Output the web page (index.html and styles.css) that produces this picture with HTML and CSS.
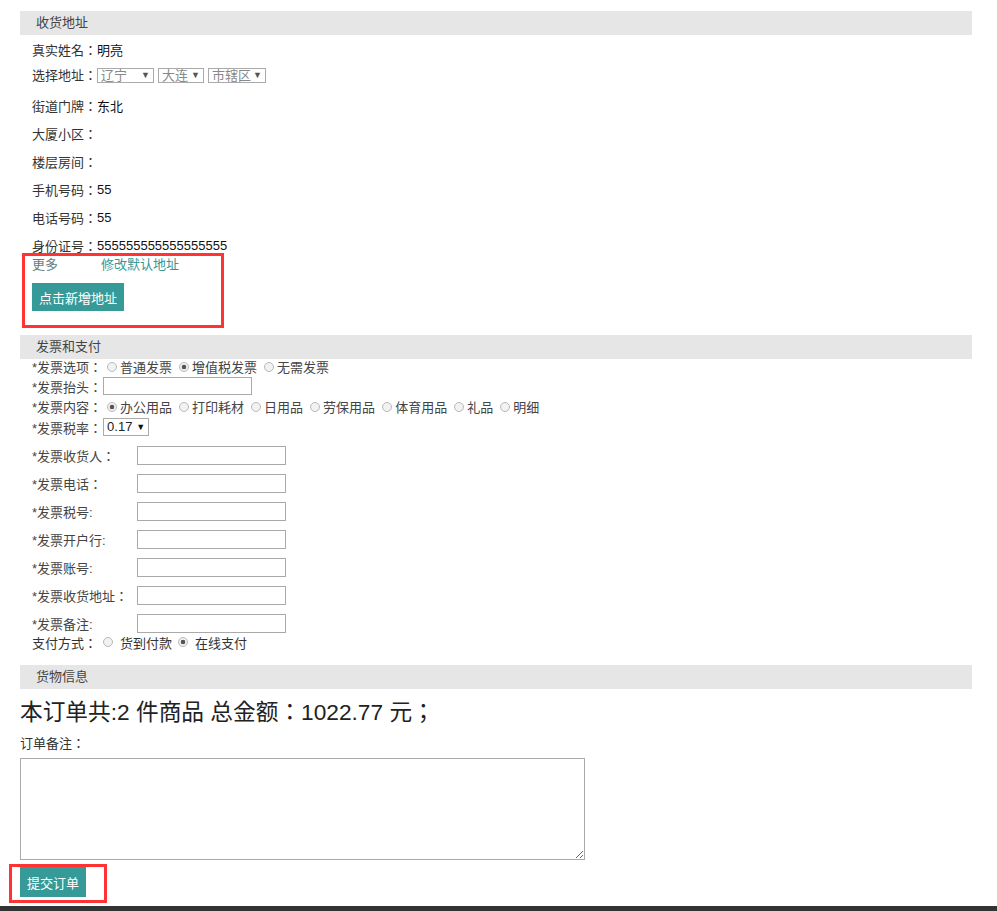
FILE: index.html
```html
<!DOCTYPE html>
<html>
<head>
    <meta charset="UTF-8">
    <title>确认订单</title>
    <link rel="stylesheet" href="styles.css">
</head>
<body>
    <div class="page">
        <div class="sec-title">收货地址</div>
        <div class="addr">
            <div class="row">真实姓名：<span class="val">明亮</span></div>
            <div class="row row-sel">选择地址：<span class="sel w-prov"><select><option>辽宁</option></select></span><span class="sel w-city"><select><option>大连</option></select></span><span class="sel w-dist"><select><option>市辖区</option></select></span></div>
            <div class="row">街道门牌：<span class="val">东北</span></div>
            <div class="row">大厦小区：</div>
            <div class="row">楼层房间：</div>
            <div class="row">手机号码：<span class="val">55</span></div>
            <div class="row">电话号码：<span class="val">55</span></div>
            <div class="row">身份证号：<span class="val">555555555555555555</span></div>
        </div>
        <div class="mark mark-addr">
            <div class="links"><a class="more" href="#">更多</a><a class="edit" href="#">修改默认地址</a></div>
            <button class="btn">点击新增地址</button>
        </div>

        <div class="sec-title sec-invoice">发票和支付</div>
        <div class="invoice">
            <div class="irow r-opt"><span>*发票选项：</span>
                <label><input type="radio" name="kind">普通发票</label>
                <label><input type="radio" name="kind" checked>增值税发票</label>
                <label><input type="radio" name="kind">无需发票</label>
            </div>
            <div class="irow r-in"><span>*发票抬头：</span><input type="text" class="txt"></div>
            <div class="irow r-opt2"><span>*发票内容：</span>
                <label><input type="radio" name="content" checked>办公用品</label>
                <label><input type="radio" name="content">打印耗材</label>
                <label><input type="radio" name="content">日用品</label>
                <label><input type="radio" name="content">劳保用品</label>
                <label><input type="radio" name="content">体育用品</label>
                <label><input type="radio" name="content">礼品</label>
                <label><input type="radio" name="content">明细</label>
            </div>
            <div class="irow r-in"><span>*发票税率：</span><span class="sel sel-rate"><select><option>0.17</option></select></span></div>

            <div class="frow"><span class="flabel">*发票收货人：</span><input type="text" class="txt"></div>
            <div class="frow"><span class="flabel">*发票电话：</span><input type="text" class="txt"></div>
            <div class="frow"><span class="flabel">*发票税号:</span><input type="text" class="txt"></div>
            <div class="frow"><span class="flabel">*发票开户行:</span><input type="text" class="txt"></div>
            <div class="frow"><span class="flabel">*发票账号:</span><input type="text" class="txt"></div>
            <div class="frow"><span class="flabel">*发票收货地址：</span><input type="text" class="txt"></div>
            <div class="frow"><span class="flabel">*发票备注:</span><input type="text" class="txt"></div>
            <div class="pay"><span>支付方式：</span>
                <label><input type="radio" name="pay">货到付款</label>
                <label><input type="radio" name="pay" checked>在线支付</label>
            </div>
        </div>

        <div class="sec-title sec-goods">货物信息</div>
        <div class="total">本订单共:2 件商品 总金额：1022.77 元；</div>
        <div class="note-label">订单备注：</div>
        <textarea class="note"></textarea>
        <div class="mark mark-submit">
            <button class="btn">提交订单</button>
        </div>
    </div>
    <div class="footer"></div>
</body>
</html>
```

FILE: styles.css
```css
body {
    margin: 0;
    font-family: "Liberation Sans", "Noto Sans CJK JP", sans-serif;
    font-size: 13px;
    color: #333;
    background: #fff;
}
.page {
    width: 952px;
    margin-left: 20px;
    padding-top: 11px;
}
.sec-title {
    height: 24px;
    line-height: 24px;
    background-color: #e6e6e6;
    padding-left: 16px;
    color: #444;
}

/* address */
.addr {
    padding-left: 12px;
}
.row {
    height: 28px;
    display: flex;
    align-items: center;
}
.row:first-child {
    height: 29px;
}
.row-sel {
    align-items: flex-start;
    padding-top: 4px;
    height: 23px;
    line-height: 15px;
}
.val {
    color: #111;
}
.sel {
    position: relative;
    display: inline-block;
    height: 15px;
    border: 1px solid #aaa;
    margin-right: 4px;
    box-sizing: border-box;
}
.sel::after {
    content: "\25BC";
    position: absolute;
    right: 3px;
    top: 0;
    font-size: 9px;
    line-height: 13px;
    color: #555;
    pointer-events: none;
}
.sel select {
    appearance: none;
    -webkit-appearance: none;
    border: none;
    background: transparent;
    font-family: inherit;
    font-size: 13px;
    line-height: 13px;
    height: 13px;
    padding: 0 0 0 3px;
    color: #888;
    width: 100%;
    display: block;
}
.w-prov { width: 57px; }
.w-city { width: 46px; }
.w-dist { width: 58px; }

.mark {
    border: 3px solid #f33;
}
.mark-addr {
    width: 189px;
    margin-left: 2px;
    margin-top: -6px;
    padding: 0 0 14px 7px;
}
.links {
    height: 18px;
    line-height: 18px;
}
.links a {
    text-decoration: none;
}
.more {
    color: #5d7f7f;
}
.edit {
    color: #3a9696;
    margin-left: 43px;
}
.btn {
    border: none;
    background-color: #369a99;
    color: #fff;
    font-family: inherit;
    font-size: 13px;
    padding: 0 7px;
    height: 28px;
    cursor: pointer;
}
.mark-addr .btn {
    margin-top: 9px;
}

/* invoice */
.sec-invoice {
    margin-top: 7px;
}
.invoice {
    padding-left: 12px;
    color: #444;
}
.irow {
    display: flex;
    align-items: center;
}
.r-opt { height: 15px; }
.r-in { height: 22px; }
.r-opt + .r-in { height: 24px; }
.r-opt2 { height: 17px; }
.r-opt2 + .r-in { height: 24px; }
.r-in .txt,
.r-in .sel {
    margin-left: 1px;
}
.irow label,
.pay label {
    display: inline-flex;
    align-items: center;
    margin-left: 7px;
}
.irow label:first-of-type {
    margin-left: 5px;
}
input[type="radio"] {
    appearance: none;
    -webkit-appearance: none;
    width: 10px;
    height: 10px;
    margin: 0 3px 0 0;
    border: 1px solid #b8b8b8;
    border-radius: 50%;
    background: #f2f2f2;
    box-sizing: border-box;
}
input[type="radio"]:checked {
    background: radial-gradient(circle, #555 0 2px, #f2f2f2 2.6px);
}
.txt {
    width: 149px;
    height: 19px;
    border: 1px solid #aaa;
    box-sizing: border-box;
    padding: 0 3px;
    margin: 0;
}
.r-in .txt {
    height: 18px;
}
.sel-rate {
    width: 46px;
    height: 18px;
    margin-right: 0;
}
.sel-rate::after {
    line-height: 16px;
    color: #111;
}
.sel-rate select {
    height: 16px;
    line-height: 16px;
    color: #222;
}
.frow {
    display: flex;
    align-items: center;
    height: 19px;
    margin-top: 9px;
}
.r-in + .frow {
    margin-top: 7px;
}
.flabel {
    width: 105px;
}
.pay {
    height: 18px;
    display: flex;
    align-items: center;
    color: #333;
}
.pay label {
    margin-left: 6px;
}
.pay input[type="radio"] {
    margin-right: 7px;
}

/* goods */
.sec-goods {
    margin-top: 14px;
}
.total {
    margin-top: 8px;
    font-size: 22.7px;
    line-height: 30px;
    color: #222;
}
.note-label {
    margin-top: 8px;
    line-height: 18px;
}
.note {
    display: block;
    margin-top: 5px;
    width: 565px;
    height: 102px;
    border: 1px solid #aaa;
    box-sizing: border-box;
}
.mark-submit {
    width: 69px;
    margin: 4px 0 0 -11px;
    padding: 0 15px 3px 8px;
}
.mark-submit .btn {
    height: 30px;
    display: block;
}
.footer {
    margin-top: 3px;
    height: 10px;
    background-color: #333;
}
```
